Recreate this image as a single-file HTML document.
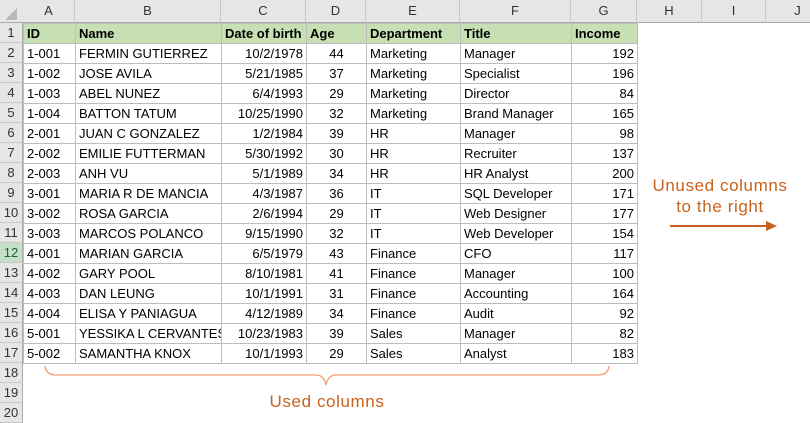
<!DOCTYPE html>
<html><head><meta charset="utf-8"><style>
*{margin:0;padding:0;box-sizing:border-box}
body{width:810px;height:423px;background:#fff;font-family:"Liberation Sans",Arial,sans-serif;font-size:13px;color:#000;position:relative;overflow:hidden}
.c{position:absolute;height:20px;line-height:20px;white-space:nowrap;overflow:hidden;padding:0 3px}
.hd{position:absolute;background:#e6e6e6;color:#333;text-align:center;font-size:13px;line-height:22px}
.rh{position:absolute;left:0;width:23px;background:#e6e6e6;color:#333;text-align:center;height:20px;line-height:20px;border-bottom:1px solid #c8c8c8;border-right:1px solid #aaa}
.t{color:#c8611b;position:absolute;font-size:17px;letter-spacing:0.6px;text-align:center}
</style></head><body>
<div class="hd" style="left:0;top:0;width:810px;height:23px;border-bottom:1px solid #aaa"></div>
<svg style="position:absolute;left:4px;top:7px" width="14" height="14"><polygon points="13,1 13,13 1,13" fill="#b8b8b8"/></svg>
<div id="g"></div>
<svg style="position:absolute;left:0;top:0" width="810" height="423">
<path d="M45 366 Q46 375 56 375 L316 375 Q324 375 326 385 Q328 375 336 375 L598 375 Q608 375 609 366" fill="none" stroke="#f0a070" stroke-width="1.3"/>
<line x1="670" y1="226" x2="766" y2="226" stroke="#c8611b" stroke-width="2"/>
<polygon points="766,221 777,226 766,231" fill="#c8611b"/>
</svg>
<div class="t" style="left:640px;top:175px;width:160px;line-height:21px">Unused columns<br>to the right</div>
<div class="t" style="left:247px;top:391px;width:160px;line-height:21px">Used columns</div>
<script>
var cols=[[23,75,'A'],[75,221,'B'],[221,306,'C'],[306,366,'D'],[366,460,'E'],[460,571,'F'],[571,637,'G'],[637,702,'H'],[702,766,'I'],[766,830,'J']];
var al=['l','l','r','c','l','l','r'];
var data=[["ID","Name","Date of birth","Age","Department","Title","Income"],
["1-001","FERMIN GUTIERREZ","10/2/1978","44","Marketing","Manager","192"],
["1-002","JOSE AVILA","5/21/1985","37","Marketing","Specialist","196"],
["1-003","ABEL NUNEZ","6/4/1993","29","Marketing","Director","84"],
["1-004","BATTON TATUM","10/25/1990","32","Marketing","Brand Manager","165"],
["2-001","JUAN C GONZALEZ","1/2/1984","39","HR","Manager","98"],
["2-002","EMILIE FUTTERMAN","5/30/1992","30","HR","Recruiter","137"],
["2-003","ANH VU","5/1/1989","34","HR","HR Analyst","200"],
["3-001","MARIA R DE MANCIA","4/3/1987","36","IT","SQL Developer","171"],
["3-002","ROSA GARCIA","2/6/1994","29","IT","Web Designer","177"],
["3-003","MARCOS POLANCO","9/15/1990","32","IT","Web Developer","154"],
["4-001","MARIAN GARCIA","6/5/1979","43","Finance","CFO","117"],
["4-002","GARY POOL","8/10/1981","41","Finance","Manager","100"],
["4-003","DAN LEUNG","10/1/1991","31","Finance","Accounting","164"],
["4-004","ELISA Y PANIAGUA","4/12/1989","34","Finance","Audit","92"],
["5-001","YESSIKA L CERVANTES","10/23/1983","39","Sales","Manager","82"],
["5-002","SAMANTHA KNOX","10/1/1993","29","Sales","Analyst","183"]];
var h='';
cols.forEach(function(c){h+='<div class="hd" style="left:'+c[0]+'px;top:0;width:'+(c[1]-c[0])+'px;height:23px;border-right:1px solid #c8c8c8;border-bottom:1px solid #aaa">'+c[2]+'</div>';});
for(var r=1;r<=20;r++){var y=23+(r-1)*20;
h+='<div class="rh" style="top:'+y+'px;'+(r==12?'background:#c5dfc9;color:#215f34;':'')+'">'+r+'</div>';
if(r<=17){for(var i=0;i<7;i++){var c=cols[i];var a=al[i];
h+='<div class="c" style="left:'+c[0]+'px;top:'+y+'px;width:'+(c[1]-c[0]+1)+'px;height:21px;border:1px solid #bdbdbd;'+(r==1?'background:#c6e0b4;font-weight:bold;text-align:left;':'text-align:'+(a=='l'?'left':a=='r'?'right':'center')+';')+'">'+data[r-1][i]+'</div>';}}}
document.getElementById('g').innerHTML=h;
</script>
</body></html>
